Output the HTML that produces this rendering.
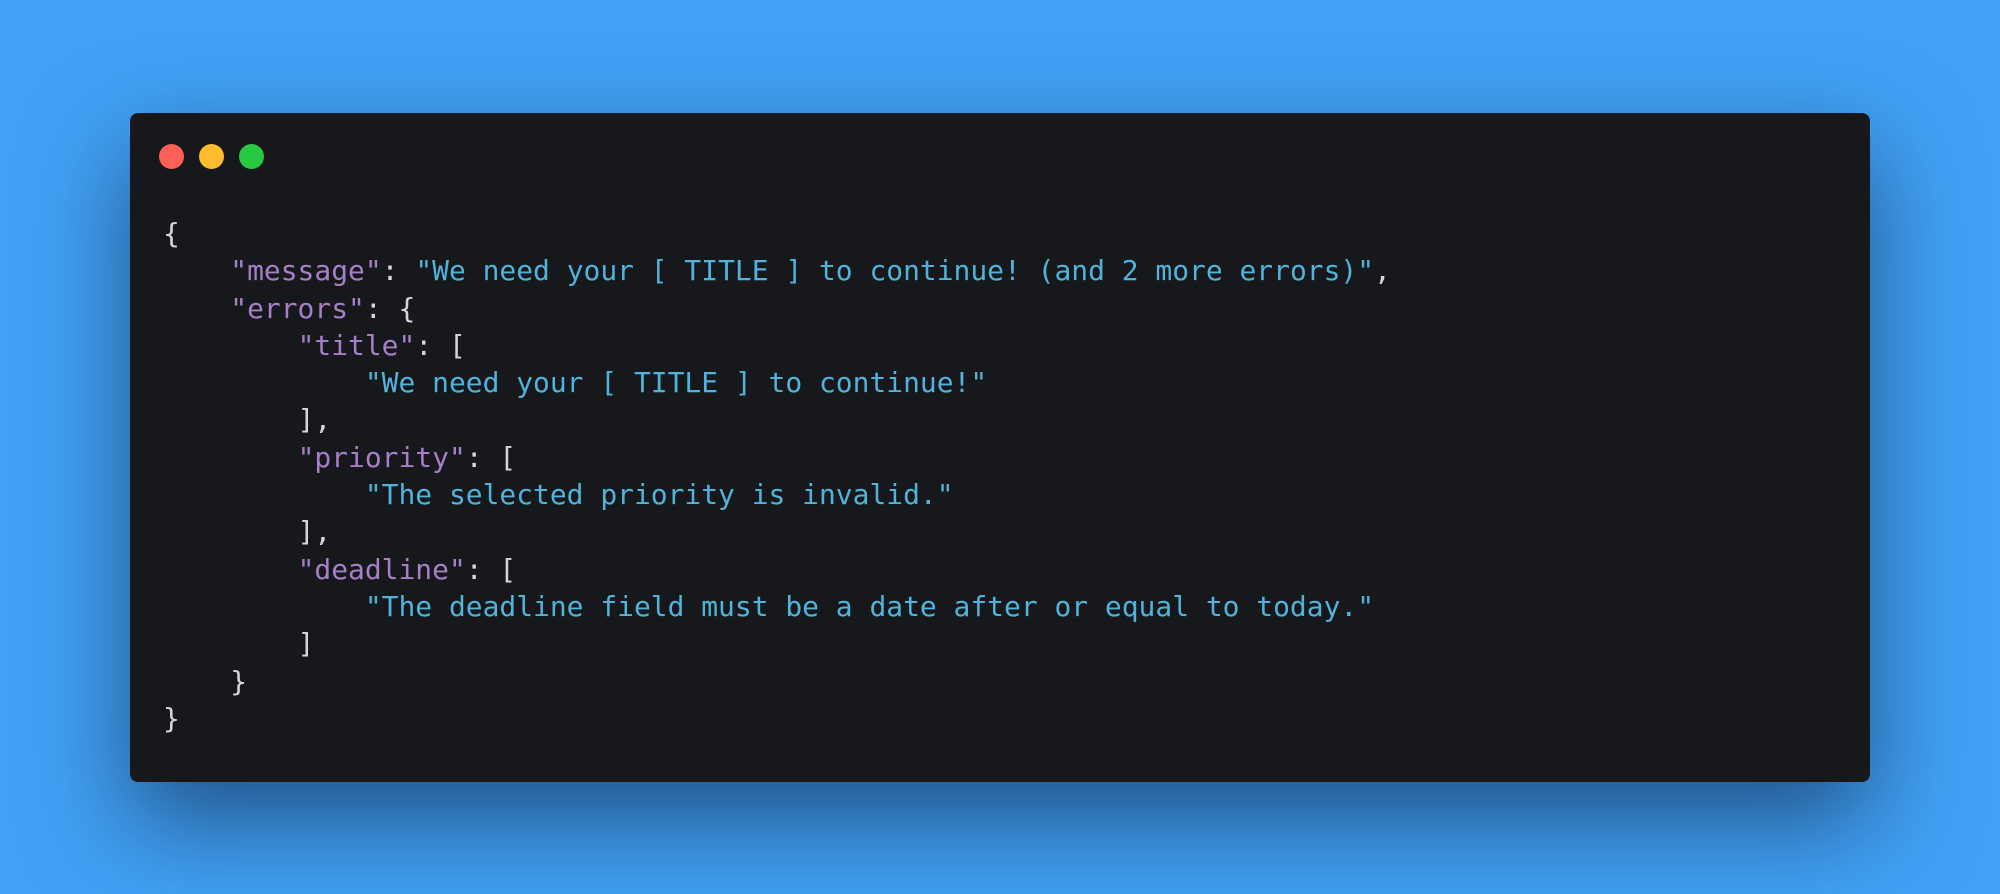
<!DOCTYPE html>
<html><head><style>
html,body{margin:0;padding:0;width:2000px;height:894px;overflow:hidden;background:#42a1f5;}
.win{position:absolute;left:130px;top:113px;width:1740px;height:669px;background:#17181b;border-radius:8px;box-shadow:0 40px 100px rgba(10,30,60,0.6);}
.dot{position:absolute;top:144px;width:25px;height:25px;border-radius:50%;}
pre{position:absolute;left:163px;top:215px;margin:0;font-family:"DejaVu Sans Mono","Liberation Mono",monospace;font-size:27.95px;line-height:37.3px;color:#d6d6d6;}
.k{color:#a67fc6}.s{color:#4fb3dc}
</style></head><body>
<div class="win"></div>
<div class="dot" style="left:159px;background:#fe5f57"></div>
<div class="dot" style="left:199px;background:#febc2e"></div>
<div class="dot" style="left:239px;background:#28c840"></div>
<pre>{
    <span class="k">"message"</span>: <span class="s">"We need your [ TITLE ] to continue! (and 2 more errors)"</span>,
    <span class="k">"errors"</span>: {
        <span class="k">"title"</span>: [
            <span class="s">"We need your [ TITLE ] to continue!"</span>
        ],
        <span class="k">"priority"</span>: [
            <span class="s">"The selected priority is invalid."</span>
        ],
        <span class="k">"deadline"</span>: [
            <span class="s">"The deadline field must be a date after or equal to today."</span>
        ]
    }
}</pre>
</body></html>
